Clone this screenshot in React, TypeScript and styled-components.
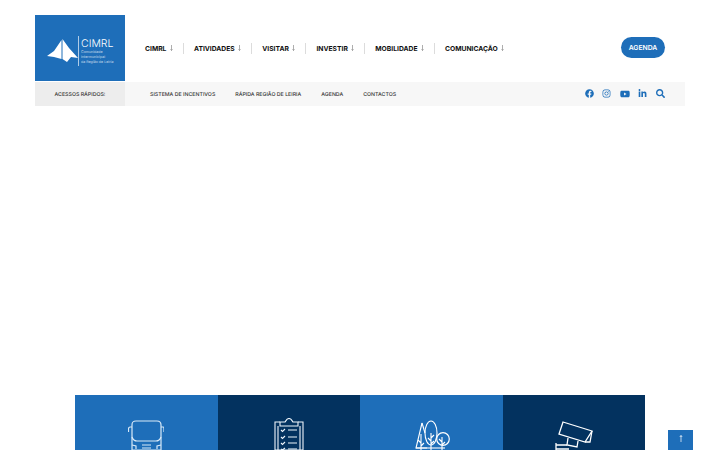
import React from "react";
import styled, { createGlobalStyle } from "styled-components";
import { FaFacebook, FaInstagram, FaYoutube, FaLinkedinIn, FaSearch } from "react-icons/fa";

const Global = createGlobalStyle`
  html, body { margin: 0; padding: 0; background: #fff; }
  body { width: 720px; height: 450px; overflow: hidden; font-family: "Inter", "Open Sans", "Liberation Sans", sans-serif; text-rendering: geometricPrecision; }
  * { box-sizing: border-box; }
`;

const Page = styled.div`
  position: relative;
  width: 720px;
  height: 450px;
  overflow: hidden;
  padding-top: 15px;
`;
const Header = styled.header`
  margin: 0 35px;
  width: 650px;
`;
const TopRow = styled.div`
  display: flex;
  align-items: center;
  height: 67px;
`;
const Logo = styled.div`
  width: 90px;
  height: 66px;
  margin-bottom: 1px;
  background: #1e6eb9;
  display: flex;
  align-items: center;
  padding: 6px 0 0 12px;
  flex: none;
`;
const LogoDivider = styled.div`
  width: 1px;
  height: 30px;
  background: rgba(255,255,255,0.65);
  margin: 0 2px 0 0;
`;
const LogoText = styled.div`
  color: #fff;
  display: flex;
  flex-direction: column;
`;
const LogoName = styled.span`
  font-size: 10.5px;
  font-weight: 300;
  line-height: 12px;
`;
const LogoSub = styled.span`
  font-size: 3.6px;
  line-height: 5px;
  white-space: nowrap;
  opacity: 0.7;
`;
const Nav = styled.nav`
  display: flex;
  align-items: center;
  margin-left: 20px;
  flex: 1;
`;
const NavItem = styled.a<{ $last?: boolean }>`
  display: flex;
  align-items: center;
  height: 11px;
  padding-right: 10px;
  margin-right: 10px;
  border-right: ${(p) => (p.$last ? "none" : "1px solid #dcdcdc")};
  color: #111;
  font-size: 6.75px;
  font-weight: 700;
  white-space: nowrap;
`;
const Arrow = styled.svg`
  margin-left: 3.500px;
  margin-top: -1px;
`;
const AgendaButton = styled.a`
  width: 44px;
  height: 21px;
  border-radius: 11px;
  background: #1e6eb9;
  color: #fff;
  display: flex;
  align-items: center;
  justify-content: center;
  font-size: 6.8px;
  font-weight: 600;
  margin-right: 20px;
  margin-bottom: 2px;
`;
const SubBar = styled.div`
  display: flex;
  align-items: center;
  height: 24px;
  background: #f7f7f7;
`;
const QuickLabel = styled.div`
  width: 90px;
  height: 100%;
  background: #ededed;
  color: #333;
  font-size: 5.25px;
  font-weight: 500;
  display: flex;
  align-items: center;
  justify-content: center;
  padding-top: 1px;
  white-space: nowrap;
`;
const QuickLinks = styled.div`
  display: flex;
  gap: 20px;
  margin-left: 25px;
  padding-top: 1px;
  flex: 1;
`;
const QuickLink = styled.a`
  color: #333;
  font-size: 5.25px;
  font-weight: 500;
  white-space: nowrap;
`;
const Socials = styled.div`
  display: flex;
  align-items: center;
  gap: 8.6px;
  margin: 0 20px 1px 0;
  color: #1e6eb9;
  font-size: 9px;
  svg { display: block; }
`;
const Cards = styled.div`
  position: absolute;
  left: 75px;
  top: 395px;
  width: 570px;
  display: grid;
  grid-template-columns: repeat(4, 1fr);
`;
const Card = styled.div<{ $dark?: boolean }>`
  height: 55px;
  background: ${(p) => (p.$dark ? "#03325f" : "#1e6eb9")};
  display: flex;
  justify-content: center;
  padding-top: 23px;
`;
const BackTop = styled.a`
  position: absolute;
  left: 668px;
  top: 430px;
  width: 25px;
  height: 20px;
  background: #1e6eb9;
  display: flex;
  align-items: flex-start;
  justify-content: center;
  padding-top: 5px;
`;

const NavArrow = () => (
  <Arrow width="3" height="6" viewBox="0 0 3 6" fill="none" stroke="#777" strokeWidth="0.6">
    <path d="M1.5 0v5.4M0.5 4.3l1 1.2 1-1.2" />
  </Arrow>
);

const Bus = () => (
  <svg width="36" height="32" viewBox="0 0 36 32" fill="none" stroke="#d8e9f8" strokeWidth="1.2">
    <path d="M4 7c0-3 1-4 4-4h21c3 0 4 1 4 4v25H4z" />
    <path d="M4 9H2c-1 0-1.500 1-1.500 2v3M33 9h2c1 0 1 1 1 2v3" />
    <path d="M4 19c1 3 2 4 5 4h19c3 0 4-1 5-4" />
    <path d="M14 27h9M14 30h9M4 27l4 1v3M33 27l-4 1v3" />
  </svg>
);
const Clipboard = () => (
  <svg width="30" height="32" viewBox="0 0 30 32" fill="none" stroke="#eef5fb" strokeWidth="1.1">
    <path d="M6 4H1v28h28V4h-5" />
    <path d="M4 8v24M26 8v24" />
    <path d="M6 8V4h5c1-1 1.500-3.500 4-3.500S18 3 19 4h5v4z" />
    <path d="M7 12l1.500 1.500L11 11M7 19l1.500 1.500L11 18M7 25l1.500 1.500L11 24M7 31l1.500 1L11 30" />
    <path d="M14 12h9M14 19h9M14 25h9" />
    <path d="M14 31.500h9" strokeWidth="2.500" stroke="#a9bccd" />
  </svg>
);
const Trees = () => (
  <svg width="38" height="32" viewBox="0 0 38 32" fill="none" stroke="#fff" strokeWidth="1.1">
    <path d="M10 5L4 30h11" />
    <path d="M10 5l3 10" />
    <path d="M9 32V16M9 25l-3-3M9 28l3-3" />
    <ellipse cx="19" cy="15" rx="6" ry="12" />
    <path d="M19 32V15M19 23l-3-3M19 20l3-3M19 26l3-3" />
    <circle cx="31" cy="21" r="6.300" strokeWidth="1.200" />
    <path d="M30 32V19M30 24l-3-3M30 27l3-3" />
    <path d="M4 30h29" />
  </svg>
);
const Camera = () => (
  <svg width="40" height="32" viewBox="0 0 40 32" fill="none" stroke="#fff" strokeWidth="1.3">
    <path d="M9 4l29 9-7 11-26-8z" />
    <path d="M38 13l-2 11h-5" />
    <path d="M14 20l-1 7 10 2 1-6" />
    <path d="M2 25v7M2 27h11M2 31h13" />
  </svg>
);

const navItems = ["CIMRL", "ATIVIDADES", "VISITAR", "INVESTIR", "MOBILIDADE", "COMUNICAÇÃO"];
const links = ["SISTEMA DE INCENTIVOS", "RÁPIDA REGIÃO DE LEIRIA", "AGENDA", "CONTACTOS"];

export default function App() {
  return (
    <Page>
      <Global />
      <Header>
        <TopRow>
          <Logo>
            <svg width="31" height="24" viewBox="0 0 31 24" fill="#fff">
              <path d="M0 17L7 12 14.500 1 14.500 20 7 18z" />
              <path d="M15.500 0L22 9 31 19 24 18 20 23 15.500 20z" />
            </svg>
            <LogoDivider />
            <LogoText>
              <LogoName>CIMRL</LogoName>
              <LogoSub>Comunidade</LogoSub>
              <LogoSub>Intermunicipal</LogoSub>
              <LogoSub>da Região de Leiria</LogoSub>
            </LogoText>
          </Logo>
          <Nav>
            {navItems.map((n, i) => (
              <NavItem key={n} $last={i === navItems.length - 1}>
                {n}
                <NavArrow />
              </NavItem>
            ))}
          </Nav>
          <AgendaButton>AGENDA</AgendaButton>
        </TopRow>
        <SubBar>
          <QuickLabel>ACESSOS RÁPIDOS:</QuickLabel>
          <QuickLinks>
            {links.map((l) => (
              <QuickLink key={l}>{l}</QuickLink>
            ))}
          </QuickLinks>
          <Socials>
            <FaFacebook />
            <FaInstagram />
            <FaYoutube size={10} />
            <FaLinkedinIn />
            <FaSearch />
          </Socials>
        </SubBar>
      </Header>
      <Cards>
        <Card><Bus /></Card>
        <Card $dark><Clipboard /></Card>
        <Card><Trees /></Card>
        <Card $dark><Camera /></Card>
      </Cards>
      <BackTop>
        <svg width="4" height="7" viewBox="0 0 4 7" fill="none" stroke="#fff" strokeWidth="0.7">
          <path d="M2 7V0.500M0.800 2L2 0.500 3.200 2" />
        </svg>
      </BackTop>
    </Page>
  );
}
